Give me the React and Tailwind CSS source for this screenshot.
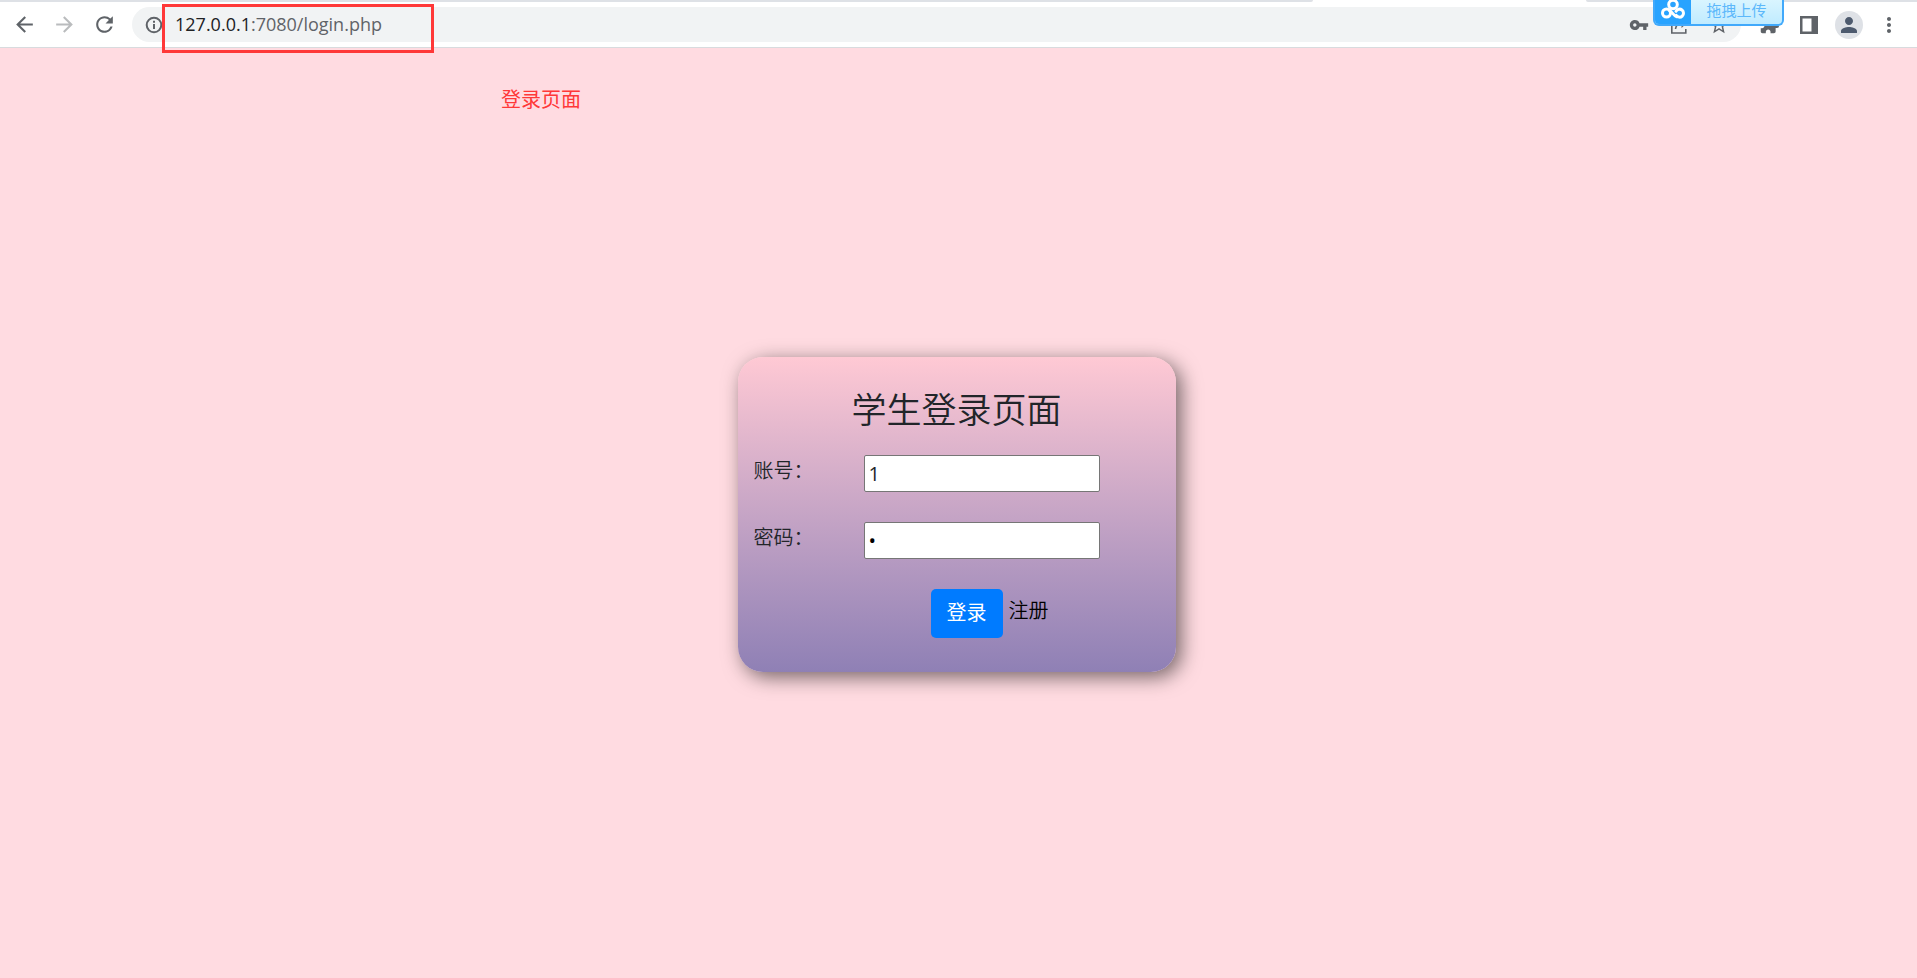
import React, { useState } from "react";
import {
  MdArrowBack,
  MdArrowForward,
  MdRefresh,
  MdVpnKey,
  MdStarBorder,
  MdExtension,
  MdPerson,
  MdMoreVert,
} from "react-icons/md";

const InfoIcon = () => (
  <svg width="20" height="20" viewBox="0 0 20 20" fill="none" stroke="currentColor" strokeWidth="2">
    <circle cx="10" cy="10" r="7.300" />
    <path d="M10 9v5M10 5.800v2" />
  </svg>
);

const ShareIcon = () => (
  <svg width="20" height="20" viewBox="0 0 20 20" fill="none" stroke="currentColor" strokeWidth="1.6">
    <path d="M7 3H2.800v15h14v-4" />
    <path d="M6.500 14c.5-4 3-6 7-6" />
    <path d="M12.500 3l5.500 5-5.500 5z" fill="currentColor" stroke="none" />
  </svg>
);

const SidePanelIcon = () => (
  <svg width="18" height="18" viewBox="0 0 18 18" fill="currentColor">
    <path fillRule="evenodd" d="M0 0h18v18H0zM2.500 2.500v13h9v-13z" />
  </svg>
);

const CloudIcon = () => (
  <svg width="26" height="20" viewBox="0 0 26 20" fill="none" stroke="white" strokeWidth="3" strokeLinecap="round">
    <circle cx="13" cy="4.500" r="4.300" />
    <circle cx="6.500" cy="13" r="4" />
    <path d="M9.500 10.500c2.500 1 4 5 7 6.200" />
    <path d="M16 11.200a4 4 0 1 1 .2 4.200" />
  </svg>
);

const UploadBadge = () => (
  <button
    type="button"
    className="absolute top-0 right-[133px] flex h-[26px] w-[131px] overflow-hidden rounded-b-md border-2 border-t-0 border-[#41a9fb] bg-linear-to-b from-[#d9f5ff] to-[#c0ebff]"
  >
    <span className="flex h-full w-9 items-start justify-center bg-[#28a3ff]">
      <CloudIcon />
    </span>
    <span className="flex-1 text-center text-[15px] leading-5 text-[#5cb8fb]">拖拽上传</span>
  </button>
);

const Toolbar = () => (
  <header className="relative border-b border-[#d8dbde] bg-white text-[#5f6368]">
    <div className="flex h-0.5 justify-between">
      <div className="w-[1313px] rounded-br-full bg-[#dee1e6]"></div>
      <div className="w-[331px] rounded-bl-full bg-[#dee1e6]"></div>
    </div>

    <div className="flex h-[45px] items-center pr-[14px] pl-3">
      <div className="mr-[15px] flex gap-[15px]">
        <button type="button" aria-label="后退">
          <MdArrowBack size={25} />
        </button>
        <button type="button" aria-label="前进" className="text-[#babcbe]">
          <MdArrowForward size={25} />
        </button>
        <button type="button" aria-label="刷新">
          <MdRefresh size={25} />
        </button>
      </div>

      {/* Address bar */}
      <div className="flex h-[35px] flex-1 items-center rounded-full bg-[#f1f3f4] pr-2 pl-3">
        <InfoIcon />
        <a
          href="#login"
          className="ml-[11px] flex-1 pb-0.5 font-['Open_Sans','Noto_Sans',sans-serif] text-[18px] leading-6"
        >
          <span className="text-[#202124]">127.0.0.1</span>:7080/login.php
        </a>
        <div className="flex gap-3">
          <span className="flex size-7 items-center justify-center">
            <MdVpnKey size={20} />
          </span>
          <span className="flex size-7 items-center justify-center">
            <ShareIcon />
          </span>
          <span className="flex size-7 items-center justify-center">
            <MdStarBorder size={22} />
          </span>
        </div>
      </div>

      <div className="ml-[14px] flex gap-3">
        <span className="flex size-7 items-center justify-center">
          <MdExtension size={21} />
        </span>
        <span className="flex size-7 items-center justify-center">
          <SidePanelIcon />
        </span>
        <span className="flex size-7 items-center justify-center rounded-full bg-[#dee1e6] text-[#4d5a6e]">
          <MdPerson size={24} />
        </span>
        <span className="flex size-7 items-center justify-center">
          <MdMoreVert size={24} />
        </span>
      </div>
    </div>

    {/* Highlight around the url */}
    <div className="absolute top-1 left-[162px] h-[49px] w-[272px] border-3 border-[#ff3838]"></div>
    <UploadBadge />
  </header>
);

const LoginForm = () => {
  const [account, setAccount] = useState("1");
  const [password, setPassword] = useState("1");

  return (
    <form
      className="w-[438px] rounded-[25px] bg-linear-to-b from-[#ffc9d4] to-[#8f80b5] px-4 pt-8 pb-[34px] shadow-[5px_5px_20px_rgba(0,0,0,0.55)]"
      onSubmit={(e) => e.preventDefault()}
    >
      <h1 className="mb-6 text-center text-[35px] leading-[42px] font-[350] text-[#212529]">
        学生登录页面
      </h1>

      <div className="mb-[30px] flex">
        <label htmlFor="account" className="w-[110px] text-xl leading-8 font-[350] text-[#212529]">
          账号：
        </label>
        <input
          id="account"
          type="text"
          value={account}
          onChange={(e) => setAccount(e.target.value)}
          className="h-[37px] w-[236px] rounded-xs border border-[#767676] bg-white px-1 text-xl text-[#212529]"
        />
      </div>

      <div className="mb-[30px] flex">
        <label htmlFor="password" className="w-[110px] text-xl leading-8 font-[350] text-[#212529]">
          密码：
        </label>
        <input
          id="password"
          type="password"
          value={password}
          onChange={(e) => setPassword(e.target.value)}
          className="h-[37px] w-[236px] rounded-xs border border-[#767676] bg-white px-1 text-xl text-black"
        />
      </div>

      <div className="flex items-center justify-center gap-[6px] pl-[66px]">
        <button
          type="submit"
          className="h-[49px] rounded-[5px] bg-[#007bff] px-4 text-xl text-white"
        >
          登录
        </button>
        <a href="#register" className="pb-1 text-xl leading-8 font-[350] text-black">
          注册
        </a>
      </div>
    </form>
  );
};

const App = () => {
  return (
    <div className="flex min-h-screen flex-col bg-[#ffdbe1] font-['Open_Sans','Noto_Sans_CJK_SC',sans-serif]">
      <Toolbar />
      <main className="relative flex flex-1 items-center justify-center pt-0.5 pr-1">
        <p className="absolute top-9 left-[501px] text-xl leading-8 text-[#ff3838]">登录页面</p>
        <LoginForm />
      </main>
    </div>
  );
};

export default App;
